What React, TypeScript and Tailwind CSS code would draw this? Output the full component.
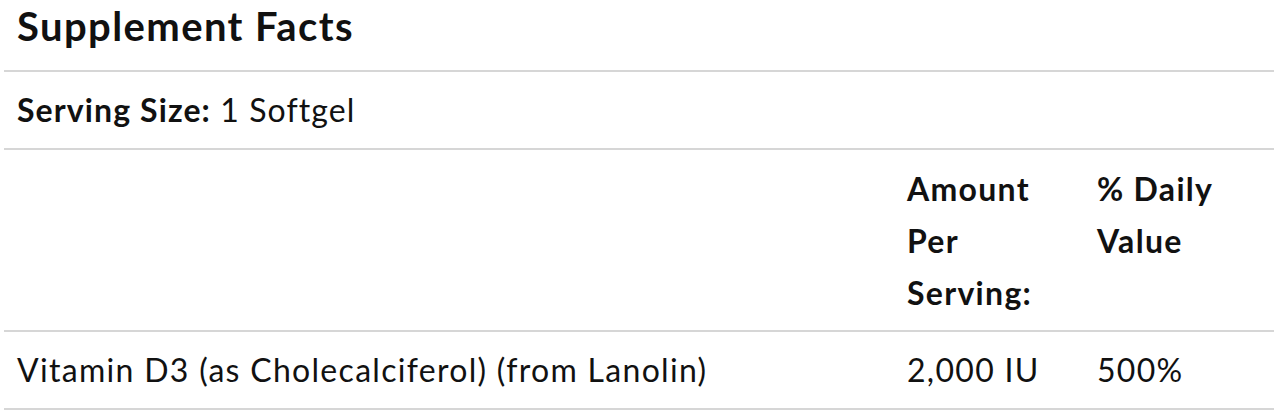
export default function App() {
  return (
    <div className="bg-white pl-[4px] pr-[7px] font-['Lato',sans-serif] text-[#111]">
      <div className="border-b-2 border-[#d6d6d6] px-[13px] pt-[5px] h-[72px]">
        <h1 className="text-[40px] font-bold leading-[43px] tracking-[1.4px]">Supplement Facts</h1>
      </div>
      <div className="border-b-2 border-[#d6d6d6] px-[13px] pt-[12px] pb-[12px] text-[32px] leading-[52px] tracking-[1.1px]">
        <span className="font-bold">Serving Size:</span> 1 Softgel
      </div>
      <table className="w-full border-collapse text-[32px] leading-[52px] tracking-[1.3px]">
        <thead>
          <tr className="border-b-2 border-[#d6d6d6]">
            <th className="w-[890px]"></th>
            <th className="w-[190px] px-[13px] pt-[13px] pb-[11px] text-left align-top font-bold">
              Amount Per Serving:
            </th>
            <th className="w-[190px] px-[13px] pt-[13px] pb-[11px] text-left align-top font-bold">
              % Daily Value
            </th>
          </tr>
        </thead>
        <tbody>
          <tr className="border-b-2 border-[#d6d6d6]">
            <td className="px-[13px] py-[12px]">Vitamin D3 (as Cholecalciferol) (from Lanolin)</td>
            <td className="px-[13px] py-[12px]">2,000 IU</td>
            <td className="px-[13px] py-[12px]">500%</td>
          </tr>
        </tbody>
      </table>
    </div>
  );
}
